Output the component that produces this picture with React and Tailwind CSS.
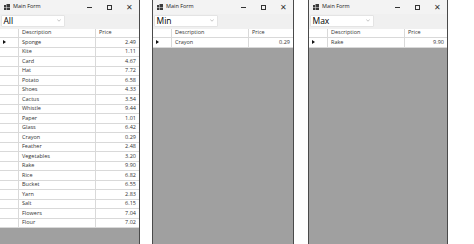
import React from 'react';

const allRows = [
    ['Sponge', '2.49'], ['Kite', '1.11'], ['Card', '4.67'], ['Hat', '7.72'],
    ['Potato', '6.58'], ['Shoes', '4.33'], ['Cactus', '3.54'], ['Whistle', '9.44'],
    ['Paper', '1.01'], ['Glass', '6.42'], ['Crayon', '0.29'], ['Feather', '2.48'],
    ['Vegetables', '3.20'], ['Rake', '9.90'], ['Rice', '6.82'], ['Bucket', '6.55'],
    ['Yarn', '2.83'], ['Salt', '6.15'], ['Flowers', '7.04'], ['Flour', '7.02'],
];

const font = { fontFamily: '"Open Sans", "Liberation Sans", sans-serif' };

const FormIcon = () => (
    <svg width="6" height="6" viewBox="0 0 6 6">
        <rect x="0" y="1" width="2" height="2" fill="#3b3b3b" />
        <rect x="0" y="3.5" width="2" height="2.5" fill="#3b3b3b" />
        <rect x="2.5" y="0" width="3.5" height="3" fill="#3b3b3b" />
        <rect x="2.5" y="3.5" width="3.5" height="2.5" fill="#3b3b3b" />
    </svg>
);

const MainForm = ({ label, rows, className }) => (
    <div className={`flex flex-col h-[244px] bg-[#f0f0f0] border-[#4a4a4a] ${className}`} style={font}>
        <div className="flex items-center h-[14px] bg-[#f3f3f3] shrink-0">
            <div className="pl-[4px] pr-[3px] flex items-center"><FormIcon /></div>
            <span className="text-[5.5px] text-[#222] leading-none">Main Form</span>
            <div className="ml-auto flex items-center h-full">
                <div className="w-[20px] flex justify-center"><div className="w-[5px] h-[0.7px] bg-[#333]" /></div>
                <div className="w-[20px] flex justify-center"><div className="w-[5px] h-[5px] border-[0.8px] border-[#333]" /></div>
                <div className="w-[20px] flex justify-center text-[8px] leading-none text-[#333]">✕</div>
            </div>
        </div>
        <div className="h-[15px] shrink-0 pl-[1px] pt-[0.5px]">
            <div className="w-[64px] h-[12.5px] bg-white border border-[#e4e4e4] rounded-[1px] flex items-center pl-[1.5px] pr-[3px]">
                <span className="text-[8.5px] leading-none text-black">{label}</span>
                <svg className="ml-auto" width="4" height="3" viewBox="0 0 4 3">
                    <path d="M0.3 0.6 L2 2.2 L3.7 0.6" stroke="#888" strokeWidth="0.5" fill="none" />
                </svg>
            </div>
        </div>
        <div className="flex-1 bg-[#a0a0a0] text-[5.5px] leading-none text-[#333]">
            <div className="flex h-[9px] bg-white border-b border-[#d9d9d9]">
                <div className="w-[19px] border-r border-[#d9d9d9]" />
                <div className="w-[77px] border-r border-[#d9d9d9] flex items-center pl-[3px]">Description</div>
                <div className="flex-1 flex items-center pl-[3px]">Price</div>
            </div>
            {rows.map(([name, price], i) => (
                <div key={name} className="flex h-[9.5px] bg-white border-b border-[#d9d9d9]">
                    <div className="w-[19px] border-r border-[#d9d9d9] flex items-center pl-[3px]">
                        {i === 0 && (
                            <svg width="3" height="4" viewBox="0 0 3 4"><path d="M0 0 L3 2 L0 4 Z" fill="#111" /></svg>
                        )}
                    </div>
                    <div className="w-[77px] border-r border-[#d9d9d9] flex items-center pl-[3px]">{name}</div>
                    <div className="flex-1 flex items-center justify-end pr-[3px]">{price}</div>
                </div>
            ))}
        </div>
    </div>
);

export default function App() {
    return (
        <div className="w-[474px] h-[244px] bg-white flex overflow-hidden">
            <MainForm label="All" rows={allRows} className="w-[140px] border-r" />
            <MainForm label="Min" rows={[['Crayon', '0.29']]} className="w-[142px] ml-[12px] border-x" />
            <MainForm label="Max" rows={[['Rake', '9.90']]} className="w-[140px] ml-[14px] border-x" />
        </div>
    );
}
